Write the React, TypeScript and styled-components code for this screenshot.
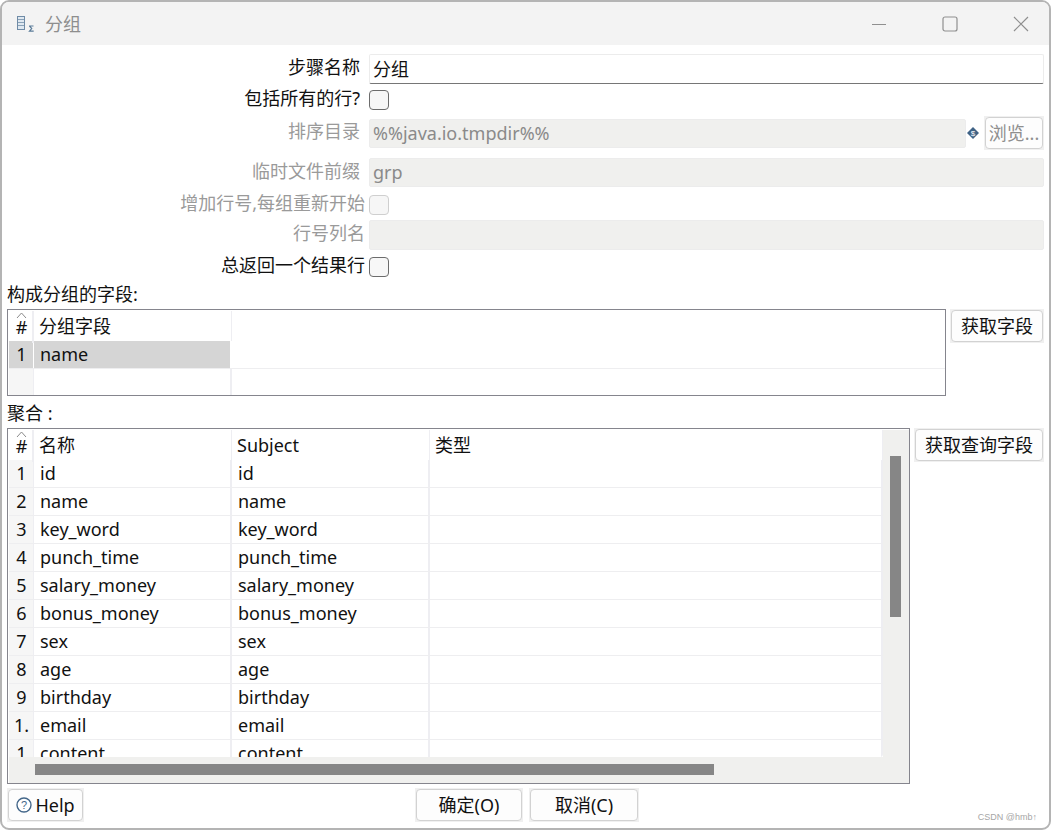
import React from 'react'
import styled, { createGlobalStyle } from 'styled-components'

const GlobalStyle = createGlobalStyle`
  html, body {
    margin: 0;
    padding: 0;
    background: #fff;
  }
  body {
    font-family: "Noto Sans", "Noto Sans CJK SC", sans-serif;
    font-size: 18px;
    color: #111;
  }
`

const UI = {
  Window: styled.div`
    position: relative;
    box-sizing: border-box;
    width: 1051px;
    height: 830px;
    border: 2px solid #b4b4b4;
    border-radius: 9px;
    background: #fff;
    overflow: hidden;
  `,
  TitleBar: styled.div`
    display: flex;
    align-items: center;
    height: 43px;
    padding-left: 14px;
    background: #f3f3f3;
  `,
  Title: styled.div`
    margin-left: 9px;
    color: #8e8e8e;
    line-height: 20px;
    flex: 1;
  `,
  WindowButton: styled.div`
    display: flex;
    align-items: center;
    justify-content: center;
    width: 16px;
    height: 16px;
    margin-right: ${({ $gap }: { $gap: number }) => $gap}px;
  `,
  Form: styled.div`
    padding: 9px 5px 0 5px;
  `,
  Row: styled.div<{ $top: number; $height: number }>`
    display: flex;
    align-items: center;
    margin-top: ${({ $top }) => $top}px;
    height: ${({ $height }) => $height}px;
  `,
  Label: styled.div<{ $disabled?: boolean; $wide?: boolean }>`
    box-sizing: border-box;
    width: 362px;
    padding-right: ${({ $wide }) => ($wide ? 4 : 9)}px;
    padding-bottom: 4px;
    text-align: right;
    line-height: 24px;
    white-space: nowrap;
    color: ${({ $disabled }) => ($disabled ? '#9a9a9a' : '#111')};
  `,
  TextField: styled.div<{ $disabled?: boolean; $height: number }>`
    box-sizing: border-box;
    flex: 1;
    height: ${({ $height }) => $height}px;
    padding-left: 3px;
    line-height: ${({ $height }) => $height - 2}px;
    border: 1px solid ${({ $disabled }) => ($disabled ? '#ececec' : '#ececec')};
    border-bottom-color: ${({ $disabled }) => ($disabled ? '#ececec' : '#767676')};
    border-radius: 2px;
    background: ${({ $disabled }) => ($disabled ? '#f0f0ee' : '#fff')};
    color: ${({ $disabled }) => ($disabled ? '#8a8a8a' : '#111')};
  `,
  CheckBox: styled.div<{ $disabled?: boolean }>`
    box-sizing: border-box;
    width: 20px;
    height: 20px;
    border: 1px solid ${({ $disabled }) => ($disabled ? '#cfcfcf' : '#6c6c6c')};
    border-radius: 4px;
    background: ${({ $disabled }) => ($disabled ? '#f6f6f6' : '#f7f7f7')};
  `,
  VarIcon: styled.svg`
    flex: none;
    margin: 0 5px 0 1px;
  `,
  ButtonFrame: styled.div`
    flex: none;
    padding: 1px;
    background: #f0f0f0;
  `,
  Button: styled.div<{ $width: number; $height?: number; $disabled?: boolean }>`
    box-sizing: border-box;
    display: flex;
    align-items: center;
    justify-content: center;
    gap: 3px;
    width: ${({ $width }) => $width}px;
    height: ${({ $height }) => $height || 32}px;
    border: 1px solid #d2d2d2;
    border-radius: 4px;
    background: #fdfdfd;
    line-height: 20px;
    white-space: nowrap;
    color: ${({ $disabled }) => ($disabled ? '#8f8f8f' : '#111')};
  `,
  SectionLabel: styled.div<{ $top: number }>`
    margin-top: ${({ $top }) => $top}px;
    height: 20px;
    line-height: 20px;
  `,
  GridRow: styled.div`
    display: flex;
    align-items: flex-start;
    justify-content: space-between;
    margin-top: 5px;
  `,
  Frame: styled.div<{ $width: number; $height: number }>`
    box-sizing: border-box;
    display: flex;
    flex-direction: column;
    flex: none;
    width: ${({ $width }) => $width}px;
    height: ${({ $height }) => $height}px;
    border: 1px solid #85858d;
    padding: 1px 0 0 1px;
    background: #fff;
  `,
  Body: styled.div`
    display: flex;
    flex: 1;
    min-height: 0;
  `,
  Viewport: styled.div`
    flex: 1;
    overflow: hidden;
    background: #fff;
    border-bottom-right-radius: 3px;
  `,
  Line: styled.div<{ $columns: string; $height: number; $ruled?: boolean }>`
    display: grid;
    grid-template-columns: ${({ $columns }) => $columns};
    height: ${({ $height }) => $height}px;
    box-sizing: border-box;
    ${({ $ruled }) => ($ruled ? 'border-bottom: 1px solid #eeeef0;' : '')}
  `,
  HeaderCell: styled.div`
    padding-left: 5px;
    line-height: 30px;
    white-space: nowrap;
    overflow: hidden;
    box-shadow: inset -1px 0 0 #eeeef2;
  `,
  Corner: styled.div`
    position: relative;
    text-align: center;
    line-height: 32px;
    box-shadow: inset -2px 0 0 #eeeef2;
  `,
  SortMark: styled.svg`
    position: absolute;
    top: 1px;
    left: 7px;
  `,
  Index: styled.div<{ $selected?: boolean }>`
    text-align: center;
    line-height: 27px;
    white-space: nowrap;
    background: ${({ $selected }) => ($selected ? '#d5d5d5' : '#f6f6f6')};
    box-shadow: inset -1px 0 0 ${({ $selected }) => ($selected ? '#fff' : '#eeeef2')};
  `,
  Cell: styled.div<{ $selected?: boolean }>`
    padding-left: 6px;
    line-height: 27px;
    white-space: nowrap;
    overflow: hidden;
    background: ${({ $selected }) => ($selected ? '#d5d5d5' : 'transparent')};
    box-shadow: inset -2px 0 0 ${({ $selected }) => ($selected ? '#fff' : '#eeeef2')};
  `,
  VTrack: styled.div`
    flex: none;
    width: 26px;
    background: #f0f0ee;
  `,
  VThumb: styled.div`
    width: 11px;
    height: 161px;
    margin: 26px 0 0 7px;
    background: #868686;
  `,
  HTrack: styled.div`
    flex: none;
    height: 26px;
    padding-top: 7px;
    box-sizing: border-box;
    background: #f0f0ee;
  `,
  HThumb: styled.div`
    width: 679px;
    height: 11px;
    margin-left: 26px;
    background: #868686;
  `,
  Footer: styled.div`
    display: flex;
    align-items: center;
    margin-top: 4px;
  `,
  Actions: styled.div`
    display: flex;
    gap: 6px;
    margin-left: 331px;
  `,
  Watermark: styled.div`
    position: absolute;
    right: 12px;
    bottom: 5px;
    font-family: "Liberation Sans", sans-serif;
    font-size: 9px;
    line-height: 11px;
    color: #a6a6a6;
  `
}

const TOP_COLUMNS = '25px 198px 1fr'
const MAIN_COLUMNS = '25px 198px 198px 1fr'

const FIELDS = [
  'id',
  'name',
  'key_word',
  'punch_time',
  'salary_money',
  'bonus_money',
  'sex',
  'age',
  'birthday',
  'email',
  'content'
]

const indexLabel = (i: number) => (i < 9 ? String(i + 1) : i === 9 ? '1.' : '1')

const SortMark = () => (
  <UI.SortMark width="11" height="7" viewBox="0 0 11 7">
    <path d="M1 6 L5.5 1 L10 6" fill="none" stroke="#8a8a8a" strokeWidth="1" />
  </UI.SortMark>
)

const StepIcon = () => (
  <svg width="20" height="18" viewBox="0 0 20 18">
    <rect x="1.5" y="1.5" width="7" height="13" fill="#dfe8f0" stroke="#6f8ba6" />
    <path d="M2 4.5h6M2 7.5h6M2 10.5h6" stroke="#8aa2b8" strokeWidth="1" />
    <path d="M13 11h4.5M13.5 11l2.2 2.6-2.2 2.6h4.2" fill="none" stroke="#5b7c99" strokeWidth="1.2" />
  </svg>
)

const App = () => (
  <>
    <GlobalStyle />
    <UI.Window>
      <UI.TitleBar>
        <StepIcon />
        <UI.Title>分组</UI.Title>
        <UI.WindowButton $gap={55}>
          <svg width="16" height="16" viewBox="0 0 16 16">
            <path d="M1 8.5h14" stroke="#8f8f8f" strokeWidth="1" />
          </svg>
        </UI.WindowButton>
        <UI.WindowButton $gap={55}>
          <svg width="16" height="16" viewBox="0 0 16 16">
            <rect x="1" y="1" width="14" height="14" rx="2" fill="none" stroke="#8f8f8f" strokeWidth="1.2" />
          </svg>
        </UI.WindowButton>
        <UI.WindowButton $gap={20}>
          <svg width="16" height="16" viewBox="0 0 16 16">
            <path d="M1 1l14 14M15 1L1 15" stroke="#8f8f8f" strokeWidth="1.2" />
          </svg>
        </UI.WindowButton>
      </UI.TitleBar>

      <UI.Form>
        <UI.Row $top={0} $height={30}>
          <UI.Label>步骤名称</UI.Label>
          <UI.TextField $height={30}>分组</UI.TextField>
        </UI.Row>
        <UI.Row $top={6} $height={20}>
          <UI.Label>包括所有的行?</UI.Label>
          <UI.CheckBox />
        </UI.Row>
        <UI.Row $top={6} $height={34}>
          <UI.Label $disabled>排序目录</UI.Label>
          <UI.TextField $disabled $height={29}>%%java.io.tmpdir%%</UI.TextField>
          <UI.VarIcon width="12" height="12" viewBox="0 0 12 12">
            <path d="M6 0l6 6-6 6-6-6z" fill="#3f6285" />
            <text x="6" y="8.8" textAnchor="middle" fontSize="8" fill="#fff" fontFamily="Liberation Sans">$</text>
          </UI.VarIcon>
          <UI.ButtonFrame>
            <UI.Button $width={58} $disabled>浏览...</UI.Button>
          </UI.ButtonFrame>
        </UI.Row>
        <UI.Row $top={8} $height={29}>
          <UI.Label $disabled>临时文件前缀</UI.Label>
          <UI.TextField $disabled $height={29}>grp</UI.TextField>
        </UI.Row>
        <UI.Row $top={8} $height={20}>
          <UI.Label $disabled $wide>增加行号,每组重新开始</UI.Label>
          <UI.CheckBox $disabled />
        </UI.Row>
        <UI.Row $top={5} $height={30}>
          <UI.Label $disabled $wide>行号列名</UI.Label>
          <UI.TextField $disabled $height={30} />
        </UI.Row>
        <UI.Row $top={7} $height={20}>
          <UI.Label $wide>总返回一个结果行</UI.Label>
          <UI.CheckBox />
        </UI.Row>

        <UI.SectionLabel $top={7}>构成分组的字段:</UI.SectionLabel>
        <UI.GridRow>
          <UI.Frame $width={939} $height={87}>
            <UI.Viewport>
              <UI.Line $columns={TOP_COLUMNS} $height={30}>
                <UI.Corner>#<SortMark /></UI.Corner>
                <UI.HeaderCell>分组字段</UI.HeaderCell>
              </UI.Line>
              <UI.Line $columns={TOP_COLUMNS} $height={28} $ruled>
                <UI.Index $selected>1</UI.Index>
                <UI.Cell $selected>name</UI.Cell>
              </UI.Line>
              <UI.Line $columns={TOP_COLUMNS} $height={26}>
                <UI.Index />
                <UI.Cell />
              </UI.Line>
            </UI.Viewport>
          </UI.Frame>
          <UI.ButtonFrame>
            <UI.Button $width={92}>获取字段</UI.Button>
          </UI.ButtonFrame>
        </UI.GridRow>

        <UI.SectionLabel $top={7}>聚合 :</UI.SectionLabel>
        <UI.GridRow>
          <UI.Frame $width={903} $height={356}>
            <UI.Body>
              <UI.Viewport>
                <UI.Line $columns={MAIN_COLUMNS} $height={30}>
                  <UI.Corner>#<SortMark /></UI.Corner>
                  <UI.HeaderCell>名称</UI.HeaderCell>
                  <UI.HeaderCell>Subject</UI.HeaderCell>
                  <UI.HeaderCell>类型</UI.HeaderCell>
                </UI.Line>
                {FIELDS.map((field, i) => (
                  <UI.Line key={field} $columns={MAIN_COLUMNS} $height={28} $ruled>
                    <UI.Index>{indexLabel(i)}</UI.Index>
                    <UI.Cell>{field}</UI.Cell>
                    <UI.Cell>{field}</UI.Cell>
                    <UI.Cell />
                  </UI.Line>
                ))}
              </UI.Viewport>
              <UI.VTrack>
                <UI.VThumb />
              </UI.VTrack>
            </UI.Body>
            <UI.HTrack>
              <UI.HThumb />
            </UI.HTrack>
          </UI.Frame>
          <UI.ButtonFrame>
            <UI.Button $width={128}>获取查询字段</UI.Button>
          </UI.ButtonFrame>
        </UI.GridRow>

        <UI.Footer>
          <UI.ButtonFrame>
            <UI.Button $width={75}>
              <svg width="16" height="16" viewBox="0 0 16 16">
                <circle cx="8" cy="8" r="7" fill="#fff" stroke="#44678a" strokeWidth="1.4" />
                <text x="8" y="12" textAnchor="middle" fontSize="11" fill="#44678a" fontFamily="Liberation Sans">?</text>
              </svg>
              Help
            </UI.Button>
          </UI.ButtonFrame>
          <UI.Actions>
            <UI.ButtonFrame>
              <UI.Button $width={106}>确定(O)</UI.Button>
            </UI.ButtonFrame>
            <UI.ButtonFrame>
              <UI.Button $width={108}>取消(C)</UI.Button>
            </UI.ButtonFrame>
          </UI.Actions>
        </UI.Footer>
      </UI.Form>

      <UI.Watermark>CSDN @hmb↑</UI.Watermark>
    </UI.Window>
  </>
)

export default App
